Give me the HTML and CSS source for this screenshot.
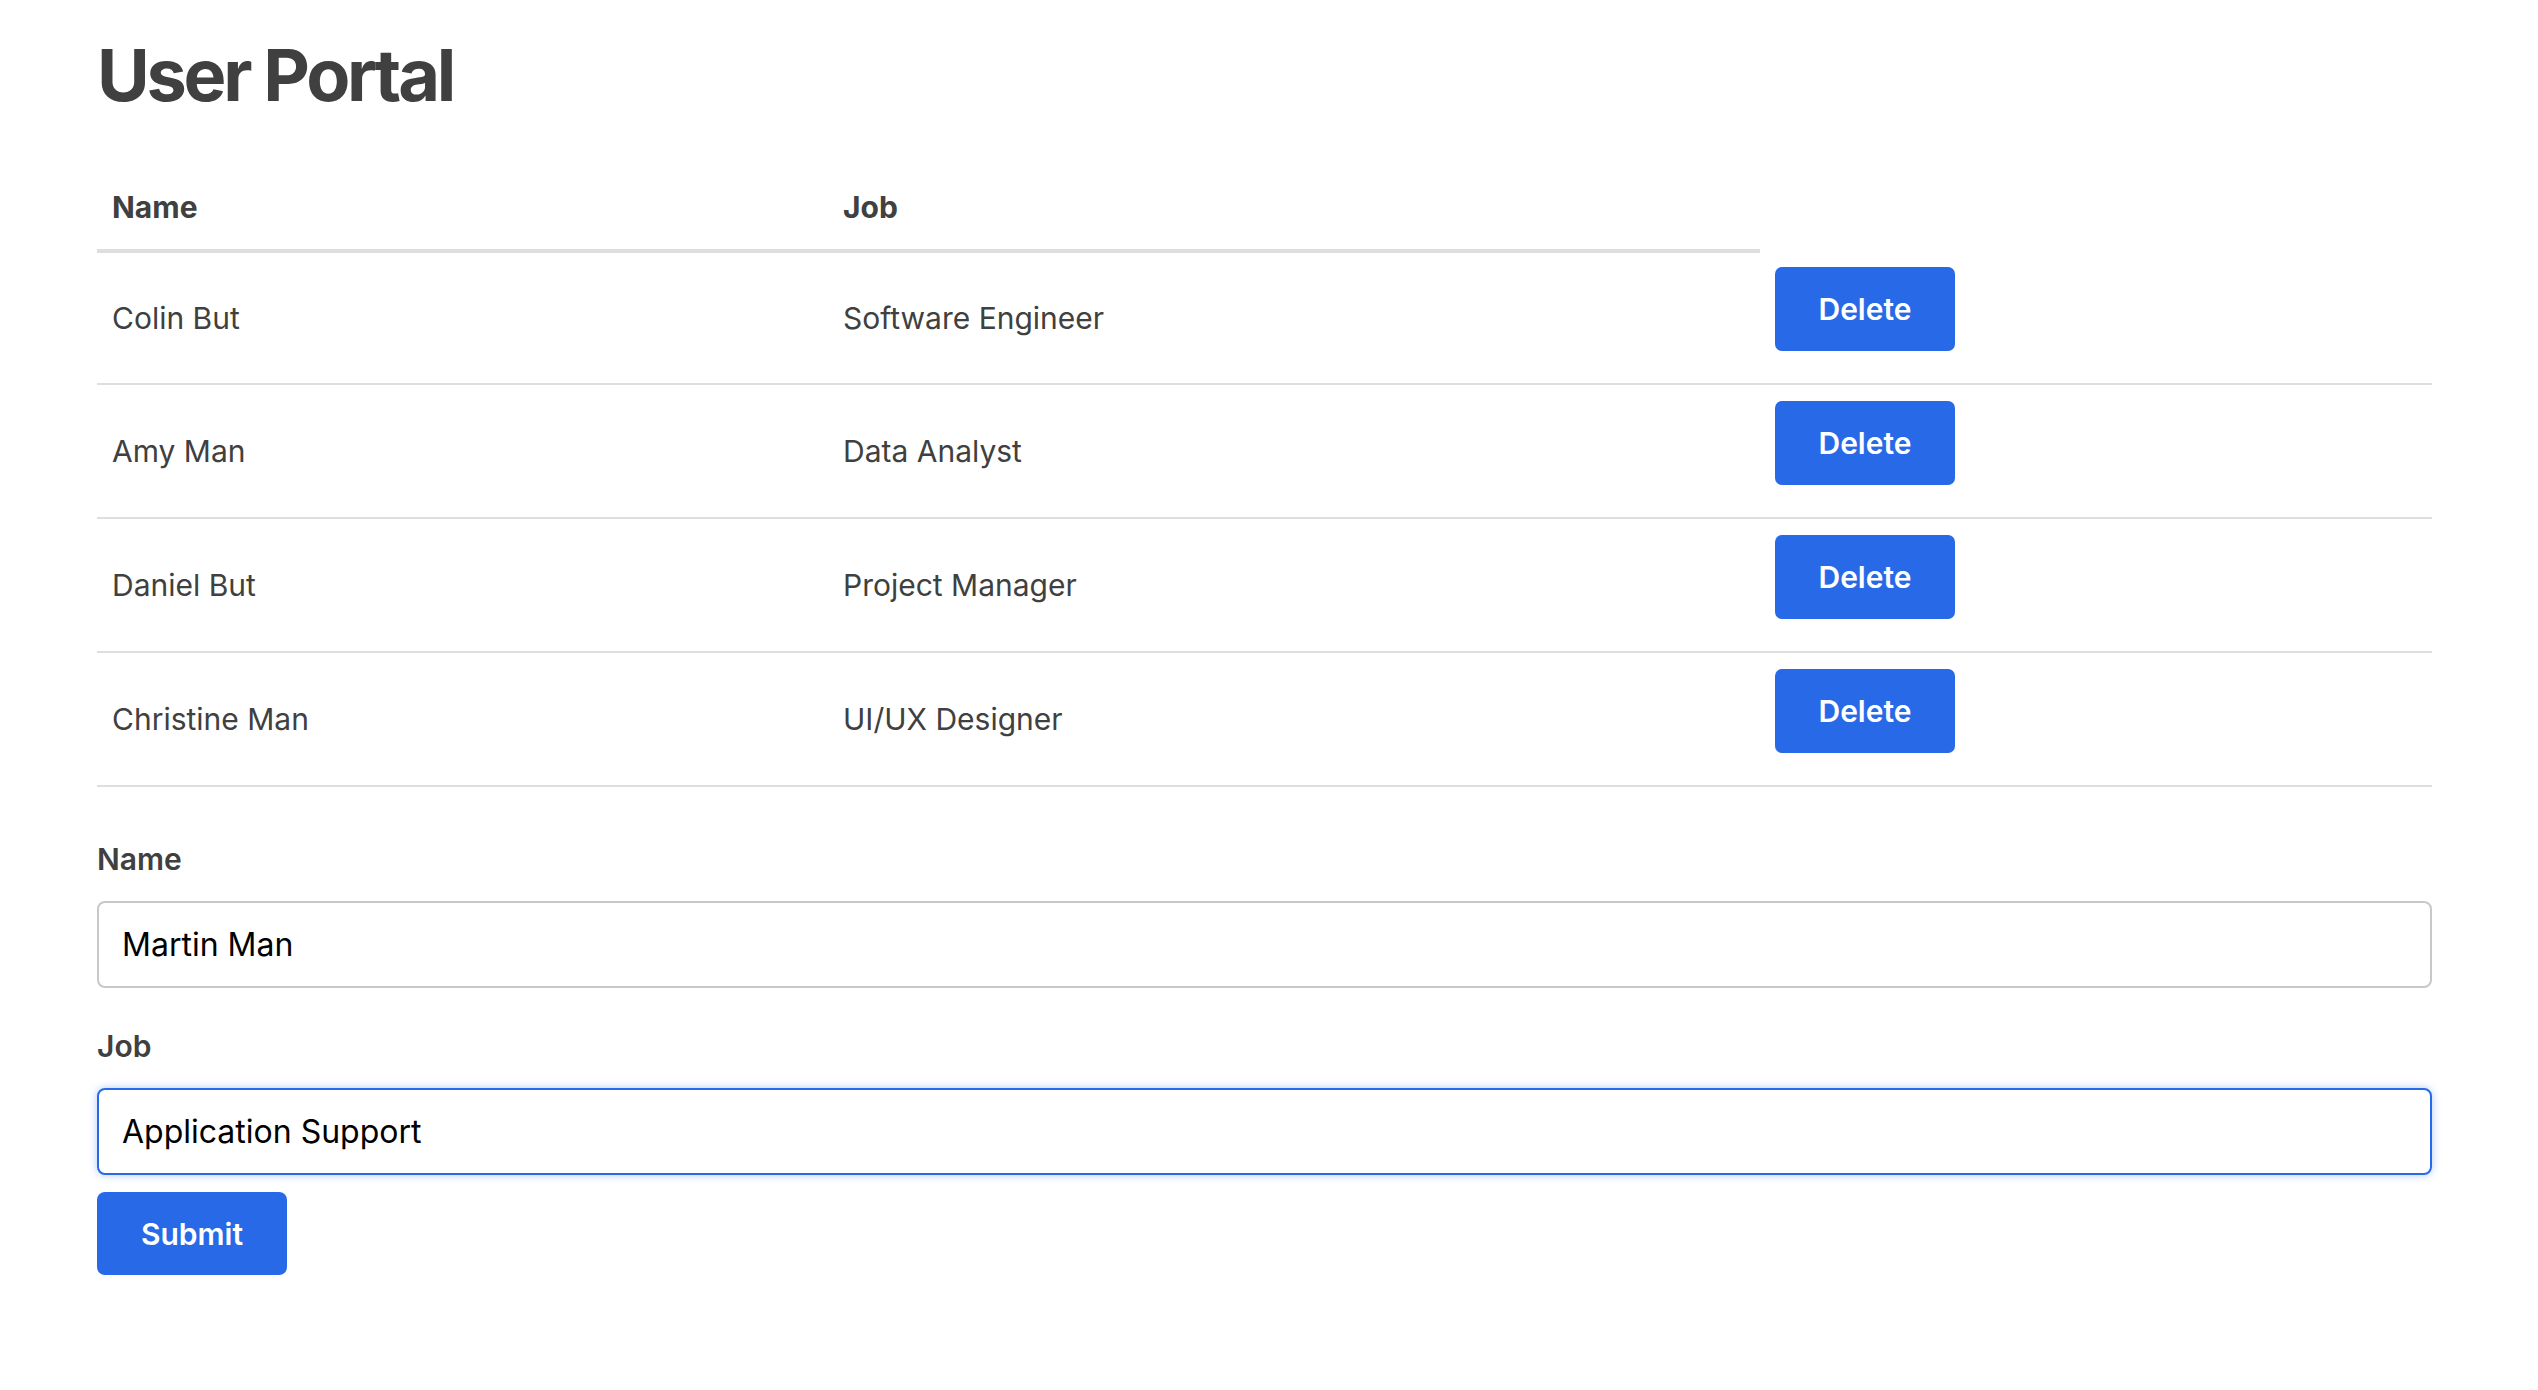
FILE: index.html
```html
<!DOCTYPE html>
<html lang="en">
<head>
<meta charset="utf-8">
<title>User Portal</title>
<link rel="stylesheet" href="styles.css">
</head>
<body>
<main class="page">
  <h1 class="title">User Portal</h1>
  <table class="users">
    <colgroup>
      <col class="col-name">
      <col class="col-job">
      <col class="col-action">
    </colgroup>
    <thead>
      <tr><th>Name</th><th>Job</th></tr>
    </thead>
    <tbody>
      <tr><td>Colin But</td><td>Software Engineer</td><td><button class="btn" type="button">Delete</button></td></tr>
      <tr><td>Amy Man</td><td>Data Analyst</td><td><button class="btn" type="button">Delete</button></td></tr>
      <tr><td>Daniel But</td><td>Project Manager</td><td><button class="btn" type="button">Delete</button></td></tr>
      <tr><td>Christine Man</td><td>UI/UX Designer</td><td><button class="btn" type="button">Delete</button></td></tr>
    </tbody>
  </table>
  <form class="form">
    <label class="label" for="name">Name</label>
    <input class="field" id="name" type="text" value="Martin Man">
    <label class="label" for="job">Job</label>
    <input class="field is-focused" id="job" type="text" value="Application Support">
    <button class="btn btn-submit" type="button">Submit</button>
  </form>
</main>
<script src="app.js"></script>
</body>
</html>
```
FILE: styles.css
```css
html, body {
  margin: 0;
  padding: 0;
  background: #ffffff;
}

body {
  font-family: Inter, "Noto Sans", "Liberation Sans", sans-serif;
  color: #404040;
  font-size: 30px;
  line-height: 45px;
}

.page {
  padding: 0 106px 0 97px;
}

.title {
  margin: 32px 0 51px;
  font-size: 72px;
  line-height: 86px;
  font-weight: 700;
  letter-spacing: -3.2px;
}

.users {
  width: 100%;
  table-layout: fixed;
  border-collapse: collapse;
}

.col-name { width: 731px; }
.col-job { width: 932px; }

.users th {
  text-align: left;
  font-weight: 700;
  padding: 16px 16px 19px 15px;
  border-bottom: 4px solid #dedede;
}

.users td {
  padding: 16px 16px 16px 15px;
  border-bottom: 2px solid #dedede;
  vertical-align: middle;
}

.btn {
  display: block;
  height: 84px;
  width: 180px;
  margin: 0 0 16px;
  padding: 0;
  border: 0;
  border-radius: 7px;
  background: #2769e6;
  color: #ffffff;
  font-family: inherit;
  font-size: 30px;
  font-weight: 600;
}

.form {
  display: flex;
  flex-direction: column;
  align-items: flex-start;
  margin-top: 50px;
}

.label {
  font-weight: 600;
  margin-bottom: 19px;
}

.field {
  box-sizing: border-box;
  width: 100%;
  height: 87px;
  margin: 0 0 36px;
  padding: 0 23px;
  border: 2px solid #c8c8c8;
  border-radius: 8px;
  font-family: inherit;
  font-size: 32px;
  color: #000000;
  background: #ffffff;
  outline: none;
  caret-color: #000000;
}

.field.is-focused {
  margin-bottom: 17px;
  border-color: #2769e6;
  box-shadow: 0 0 8px rgba(39, 105, 230, 0.35);
}

.btn-submit {
  width: 190px;
  height: 83px;
  margin: 0;
  border-radius: 8px;
}
```
FILE: app.js
```js
var job = document.getElementById('job');
job.focus();
job.setSelectionRange(job.value.length, job.value.length);
```
